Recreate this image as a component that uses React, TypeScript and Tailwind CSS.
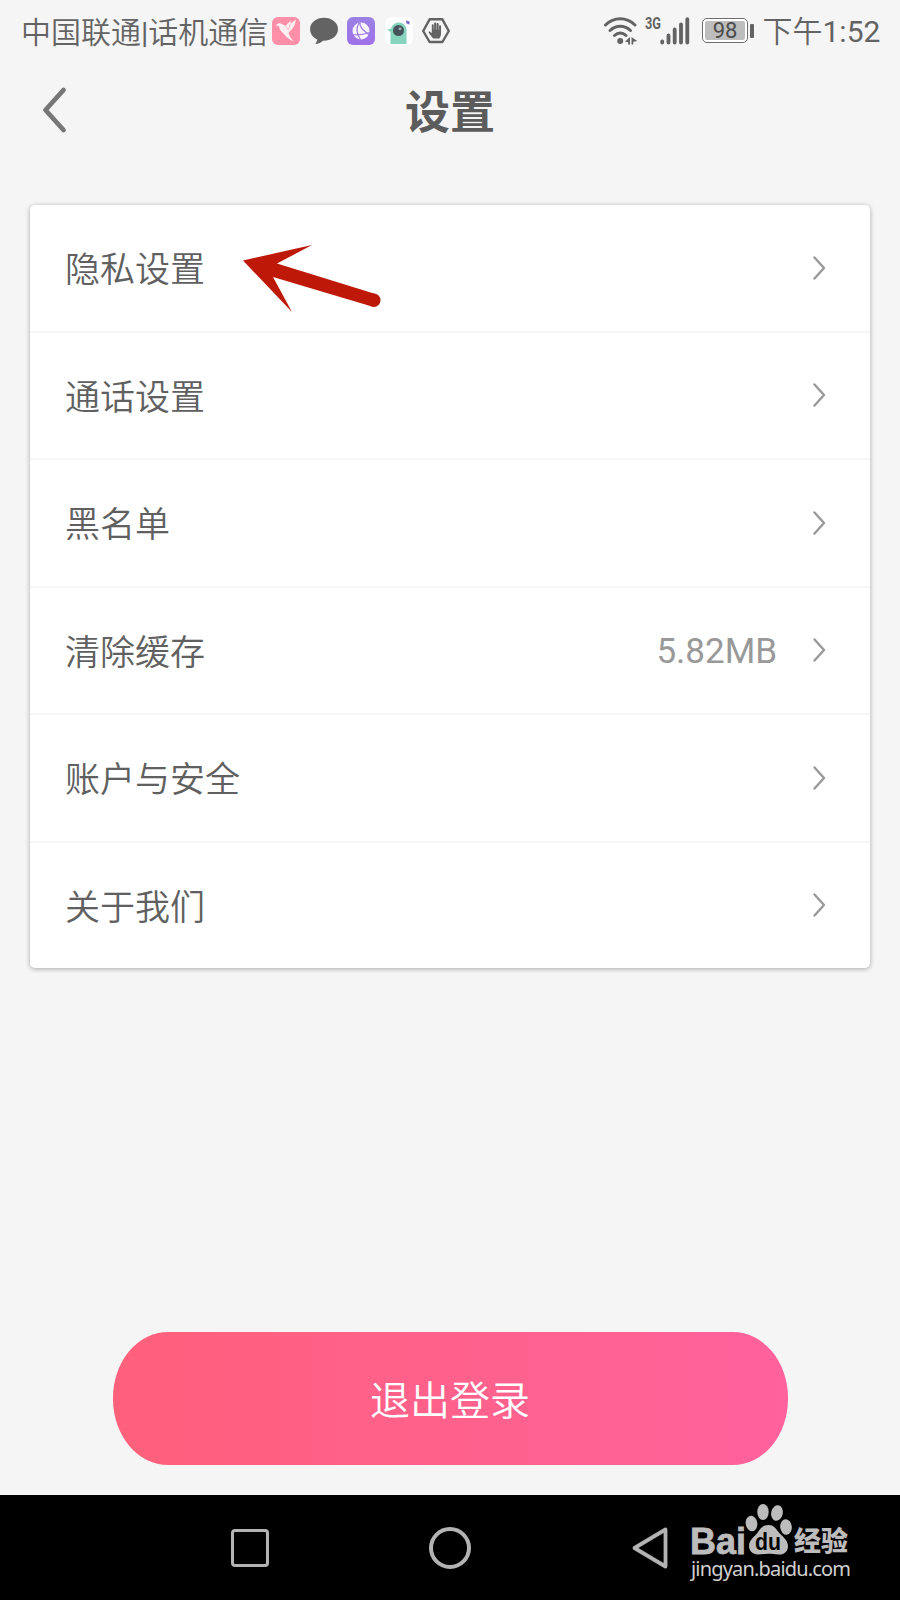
import React from 'react';

interface SettingItem {
  label: string;
  value?: string;
}

const items: SettingItem[] = [
  { label: '隐私设置' },
  { label: '通话设置' },
  { label: '黑名单' },
  { label: '清除缓存', value: '5.82MB' },
  { label: '账户与安全' },
  { label: '关于我们' },
];

const BirdIcon = () => (
  <svg width="28" height="28" viewBox="0 0 28 28">
    <rect width="28" height="28" rx="6" fill="#ff8fa9" />
    <path d="M4 8.500C5.500 6 8 5.800 10.500 7.200l3 1.600L19 3.500l-.8 3.300L24 2.500c-.5 4.500-2.500 9-6.500 12l-1 1.500c1 3 2.800 5.500 5 8.500-4.500-2.300-8-5-10.500-8.500-2.300-1.500-3.500-4.500-4.200-7z" fill="#fdeef1" />
    <path d="M13.500 9l3 3.500L18.200 7" fill="none" stroke="#ffb3c4" strokeWidth="0.900" />
  </svg>
);

const BubbleIcon = () => (
  <svg width="28" height="28" viewBox="0 0 28 28">
    <path d="M14 .7C6.200.700.100 5.600.100 12c0 4.800 3 8.700 7.200 10.600-.3 2-1.100 3.200-2.100 4.400 3.400-.3 6-1.500 7.700-3.300C21.300 24 28 19 28 12 28 5.600 21.800.7 14 .7z" fill="#636363" />
  </svg>
);

const GlobeIcon = () => (
  <svg width="28" height="28" viewBox="0 0 28 28">
    <defs>
      <linearGradient id="globeBg" x1="0" y1="0" x2="0" y2="1">
        <stop offset="0" stopColor="#9a82e4" />
        <stop offset="1" stopColor="#a070ea" />
      </linearGradient>
    </defs>
    <rect width="28" height="28" rx="6" fill="url(#globeBg)" />
    <circle cx="14" cy="14" r="8.500" fill="#f7f3fd" />
    <path d="M13 5.500c-.5 4 2 6.500 5 9s3.500 2.500 4.500 3.500M12 6c-3 5-2 11.500 1.500 16.500M5.500 17.500c5 1 10 .5 17-2" fill="none" stroke="#9b7be3" strokeWidth="1.200" />
  </svg>
);

const OneEyeIcon = () => (
  <svg width="28" height="28" viewBox="0 0 28 28">
    <rect width="28" height="28" rx="6" fill="#fdfdfd" />
    <path d="M5.500 27V15L2 12.500l4-.8C7 7.800 10.300 5.500 13.800 5.500c4.500 0 7.700 3.200 7.700 7.500v14z" fill="#86d4bd" />
    <circle cx="13.500" cy="13.500" r="5.500" fill="#46535a" />
    <circle cx="15" cy="11.800" r="1.400" fill="#a9b7bb" />
    <path d="M21 3.500l3.500 1v3L21.500 6.500z" fill="#7b6bc4" />
  </svg>
);

const StopHandIcon = () => (
  <svg width="28" height="28" viewBox="0 0 28 28">
    <path d="M7.600 2.300h12.800L26.800 14l-6.400 11H7.600L1.200 14z" fill="none" stroke="#636363" strokeWidth="2.400" strokeLinejoin="round" />
    <path d="M11.300 21.500c-1.200-1.300-3-3.500-4.500-5.800-.6-1.200.7-1.700 1.500-.9l1.500 1.500V8.300c0-1.400 1.900-1.400 1.900 0v4.200h.4V6.500c0-1.500 2.100-1.500 2.100 0v6h.4V7c0-1.500 2.100-1.500 2.100 0v5.700h.4V9.300c0-1.400 1.900-1.400 1.900 0v7.200c0 2.200-.6 3.500-1.700 5z" fill="#636363" />
  </svg>
);

const WifiIcon = () => (
  <svg width="34" height="28" viewBox="0 0 34 28">
    <g fill="none" stroke="#636363" strokeWidth="3" strokeLinecap="round">
      <path d="M1.500 8C10-.3 22.500-.3 31 8" />
      <path d="M6 13.500c6-5.600 14.500-5.600 20.500 0" />
      <path d="M10.500 18.500c3.500-3.200 8-3.200 11.500 0" />
    </g>
    <circle cx="16.200" cy="24" r="3" fill="#636363" />
    <path d="M26 20v7.500h-1.900v-2.200L21 24.500zM27.500 20v7.500h1.800v-2.700l4-.8z" fill="#636363" />
  </svg>
);

const SignalIcon = () => (
  <svg width="30" height="28" viewBox="0 0 30 28">
    <g stroke="#636363" strokeWidth="3.800" strokeLinecap="round">
      <path d="M2.200 24.500v1M8.500 18.500v7M14.700 12.500v13M21 7.500v18M27.300 2.200v23.300" />
    </g>
  </svg>
);

const StatusBar = () => (
  <div className="flex h-[61px] items-center pl-[21px] pr-5 text-[30px] leading-none text-[#636363]">
    <div className="flex w-[251px] pt-[4px] font-[350] whitespace-nowrap">
      <span>中国联通</span>
      <span className="font-normal">|</span>
      <span>话机通信</span>
    </div>
    <div className="flex gap-[9.5px]">
      <BirdIcon />
      <BubbleIcon />
      <GlobeIcon />
      <OneEyeIcon />
      <StopHandIcon />
    </div>
    <div className="ml-auto flex items-center">
      <WifiIcon />
      <span className="mb-[14px] ml-[7px] w-[15px] origin-left scale-x-[0.75] text-[17px] font-bold">3G</span>
      <SignalIcon />
      <div className="ml-[12px] flex h-[25px] w-[46px] items-center justify-center rounded-[5px] border border-[#6d6d6d] bg-white p-[2px]">
        <span className="flex h-full w-full items-center justify-center rounded-[2px] bg-[#bdbdbd] text-[22px] text-[#4c4c4c]">98</span>
      </div>
      <span className="ml-[2px] h-[14px] w-[3.500px] rounded-[1px] bg-[#636363]" />
      <div className="ml-[9px] flex w-[117.5px] items-baseline pt-[3px] whitespace-nowrap">
        <span className="font-[350]">下午</span>
        <span>1:52</span>
      </div>
    </div>
  </div>
);

const Header = () => (
  <div className="grid h-[144px] grid-cols-3 items-start px-[42px]">
    <svg className="mt-[25px]" width="26" height="48" viewBox="0 0 26 48">
      <path d="M21.500 4L3.500 24l18 20" fill="none" stroke="#777" strokeWidth="4.800" strokeLinecap="round" strokeLinejoin="round" />
    </svg>
    <h1 className="mt-[29px] text-center text-[45px] leading-[48px] font-bold text-[#5c5c5c]">设置</h1>
  </div>
);

const Row: React.FC<SettingItem> = ({ label, value }) => (
  <li className="flex flex-1 items-center pr-[43px] pl-[35px] text-[35px] leading-none">
    <span className="pt-[6px] font-[350] text-[#606060]">{label}</span>
    <span className="ml-auto pt-[2px] text-[#999]">{value}</span>
    <svg className="ml-[34px]" width="16" height="26" viewBox="0 0 16 26">
      <path d="M3.500 2.500L13 13l-9.500 10.500" fill="none" stroke="#999" strokeWidth="2.400" strokeLinecap="round" strokeLinejoin="round" />
    </svg>
  </li>
);

const PointerArrow = () => (
  <svg className="absolute top-[36px] left-[210px]" width="145" height="76" viewBox="240 241 145 76" fill="#bd1808">
    <path d="M243 260.500L312 245l-35 18.500 98.500 30.500-3.500 12.600L273 277l19 35z" />
    <circle cx="373.800" cy="300.300" r="6.700" />
  </svg>
);

const Watermark = () => (
  <svg width="164" height="95" viewBox="690 1500 164 95" fill="#bcbcbc">
    <text x="690" y="1553.500" fontSize="36" fontWeight="700" textLength="56" lengthAdjust="spacingAndGlyphs" fontFamily="Liberation Sans, sans-serif" stroke="#bcbcbc" strokeWidth="0.800">Bai</text>
    <ellipse cx="751.500" cy="1523.500" rx="5.800" ry="7.800" transform="rotate(-8 751.5 1523.5)" />
    <ellipse cx="763" cy="1512" rx="5.700" ry="8" />
    <ellipse cx="777" cy="1513" rx="5.800" ry="7.800" transform="rotate(12 777 1513)" />
    <ellipse cx="786" cy="1527" rx="5.800" ry="7.800" transform="rotate(-6 786 1527)" />
    <path d="M768.500 1525c5 0 7.500 3.500 10 7s9.500 7.500 9.500 14c0 6-4.500 9-9.500 8.500-4-.5-6-.8-10-.8s-7 .8-10.500.8c-5.500 0-9-4-9-8.500 0-6.500 6-9.500 9-14s5.500-7 10.500-7z" />
    <text x="755" y="1550" fontSize="23" fontWeight="700" textLength="26" lengthAdjust="spacingAndGlyphs" fontFamily="Liberation Sans, sans-serif" fill="#000">du</text>
    <text x="794" y="1551" fontSize="27" fontWeight="900" textLength="54" lengthAdjust="spacingAndGlyphs" fontFamily="Noto Sans CJK SC, sans-serif">经验</text>
    <text x="691" y="1575.500" fontSize="20" textLength="160" fontFamily="Noto Sans, sans-serif" fill="#d0d0d0">jingyan.baidu.com</text>
  </svg>
);

const NavBar = () => (
  <div className="flex h-[105px] items-center bg-black pl-[231px]">
    <span className="h-[38px] w-[38px] rounded-[4px] border-[3.5px] border-[#b3b3b3]" />
    <span className="ml-[160px] h-[42px] w-[42px] rounded-full border-[4px] border-[#b3b3b3]" />
    <svg className="ml-[160px]" width="38" height="44" viewBox="0 0 38 44">
      <path d="M34.500 3.500v37L3.500 22z" fill="none" stroke="#b3b3b3" strokeWidth="3.800" strokeLinejoin="round" />
    </svg>
    <div className="ml-[21px]">
      <Watermark />
    </div>
  </div>
);

export default function App() {
  return (
    <div className="flex h-[1600px] w-[900px] flex-col bg-[#f5f5f5] font-[Roboto,'Noto_Sans_CJK_SC',sans-serif]">
      <StatusBar />
      <Header />
      <div className="relative mx-[30px]">
        <ul className="flex h-[763px] flex-col divide-y-2 divide-[#f6f6f6] rounded-[5px] bg-white shadow-[0_1px_5px_rgba(0,0,0,0.32)]">
          {items.map((item) => (
            <Row key={item.label} {...item} />
          ))}
        </ul>
        <PointerArrow />
      </div>
      <button className="mx-auto mt-auto mb-[30px] h-[133px] w-[675px] rounded-[55px/66px] bg-linear-to-r from-[#ff607b] to-[#ff629c] pt-[7px] text-[40px] leading-none font-[350] text-white">
        退出登录
      </button>
      <NavBar />
    </div>
  );
}
